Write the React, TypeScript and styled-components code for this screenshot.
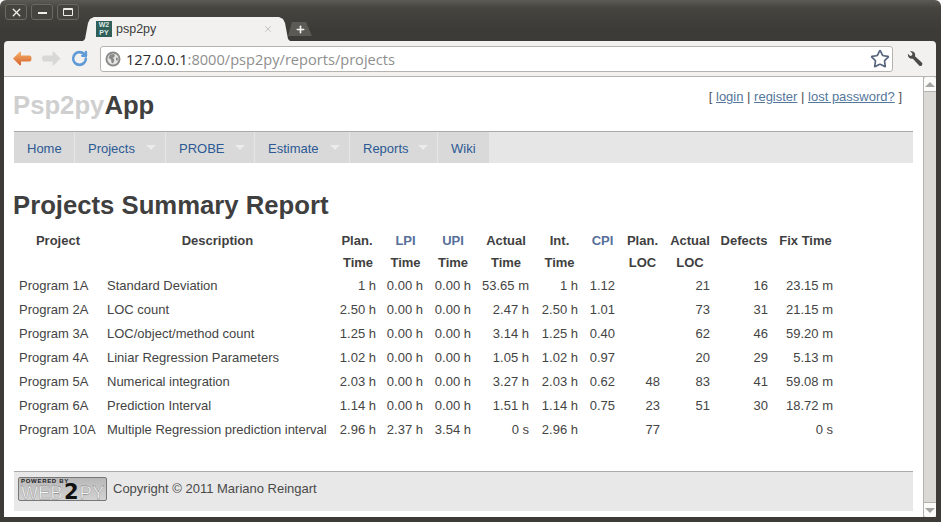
import React from 'react';
import styled, { createGlobalStyle } from 'styled-components';
import { Plus, RotateCw, Star, X } from 'lucide-react';

const GlobalStyle = createGlobalStyle`
  html, body {
    margin: 0;
    padding: 0;
    background: #fff;
  }
  body {
    font-family: "Liberation Sans", Arial, sans-serif;
    color: #444;
  }
`;

const Window = styled.div`
  width: 941px;
  height: 522px;
  overflow: hidden;
  display: flex;
  flex-direction: column;
  box-sizing: border-box;
  padding: 0 5px 5px 4px;
  border-radius: 6px 6px 0 0;
  background: linear-gradient(#5b5a54 0, #45443f 8px, #3c3b37 30px);
`;

const TabStrip = styled.div`
  height: 41px;
  flex: none;
  display: flex;
  align-items: flex-start;
`;

const WindowControls = styled.div`
  display: flex;
  gap: 4px;
  margin: 4px 0 0 1px;
`;

const WindowButton = styled.div`
  width: 22px;
  height: 16px;
  box-sizing: border-box;
  border: 1px solid #6a6962;
  border-radius: 3px;
  background: #45443f;
  color: #eeeeea;
  display: flex;
  align-items: center;
  justify-content: center;
`;

const MinimizeGlyph = styled.span`
  display: block;
  width: 9px;
  height: 2px;
  margin-top: 2px;
  background: #eeeeea;
`;

const MaximizeGlyph = styled.span`
  display: block;
  width: 8px;
  height: 5px;
  border: 1px solid #eeeeea;
  border-top-width: 2px;
  border-radius: 1px;
`;

const Tab = styled.div`
  width: 207px;
  height: 24px;
  margin: 17px 0 0 4px;
  padding: 0 17px 0 13px;
  box-sizing: border-box;
  display: flex;
  align-items: center;
  background: #f2f1f0;
  clip-path: polygon(0 100%, 2px 92%, 5px 25%, 7px 8%, 11px 0, calc(100% - 11px) 0, calc(100% - 7px) 8%, calc(100% - 5px) 25%, calc(100% - 2px) 92%, 100% 100%);
`;

const Favicon = styled.div`
  width: 16px;
  height: 16px;
  flex: none;
  background: #2f5f58;
  color: #dfe9e6;
  font-size: 7px;
  font-weight: bold;
  line-height: 8px;
  text-align: center;
`;

const TabTitle = styled.span`
  margin-left: 4px;
  font-size: 12.5px;
  color: #3c3c3c;
  flex: 1;
`;

const TabClose = styled.span`
  display: flex;
  color: #b8b8b6;
`;

const NewTabButton = styled.div`
  width: 24px;
  height: 14px;
  margin: 22px 0 0 -2px;
  background: #5b5a55;
  color: #f4f4f2;
  display: flex;
  align-items: center;
  justify-content: center;
  clip-path: polygon(0 100%, 4px 0, 18px 0, 100% 100%);
`;

const Toolbar = styled.div`
  height: 35px;
  flex: none;
  display: flex;
  align-items: center;
  box-sizing: content-box;
  padding: 0 12px 0 9px;
  background: #f2f1ef;
  border-bottom: 1px solid #b5b4b2;
  border-radius: 4px 4px 0 0;
`;

const NavIcons = styled.div`
  width: 87px;
  display: flex;
  align-items: center;
  gap: 10px;
  flex: none;
`;

const AddressBar = styled.div`
  width: 793px;
  height: 26px;
  box-sizing: border-box;
  margin-top: 1px;
  padding: 0 2px 0 4px;
  display: flex;
  align-items: center;
  background: #fff;
  border: 1px solid #b4b3b0;
  border-radius: 3px;
  font-family: "Open Sans", "Liberation Sans", sans-serif;
  font-size: 14.6px;
`;

const UrlHost = styled.span`
  margin-left: 5px;
  color: #2b2b2b;
`;

const UrlRest = styled.span`
  color: #8e8e8e;
  flex: 1;
`;

const WrenchSlot = styled.div`
  margin-left: 14px;
  display: flex;
`;

const Viewport = styled.div`
  flex: 1;
  min-height: 0;
  display: flex;
  background: #fff;
`;

const Page = styled.div`
  flex: 1;
  min-width: 0;
  display: flex;
  flex-direction: column;
  padding: 0 10px 6px 10px;
`;

const ScrollBar = styled.div`
  width: 13px;
  box-sizing: border-box;
  flex: none;
  display: flex;
  flex-direction: column;
  background: #dad9d6;
  border-left: 1px solid #b4b3b0;
`;

const ScrollButton = styled.div<{ $down?: boolean }>`
  height: 14px;
  background: #fbfbfa;
  display: flex;
  align-items: center;
  justify-content: center;
  border-radius: ${p => (p.$down ? '0 0 3px 3px' : '3px 3px 0 0')};
  border-top: ${p => (p.$down ? '1px solid #b4b3b0' : 'none')};
  border-bottom: ${p => (p.$down ? 'none' : '1px solid #b4b3b0')};
  margin-top: ${p => (p.$down ? 'auto' : '0')};
`;

const ScrollArrow = styled.span<{ $down?: boolean }>`
  width: 0;
  height: 0;
  border-left: 5px solid transparent;
  border-right: 5px solid transparent;
  border-${p => (p.$down ? 'top' : 'bottom')}: 5px solid #a5a5a3;
`;

const Header = styled.header`
  height: 54px;
  flex: none;
  display: flex;
  justify-content: space-between;
`;

const Logo = styled.h2`
  margin: 12px 0 0 -1px;
  font-size: 25.7px;
  line-height: 32px;
  font-weight: bold;
  color: #3f3f3f;
`;

const LogoLight = styled.span`
  color: #cfcfcf;
`;

const AuthLinks = styled.div`
  margin: 12px 11px 0 0;
  font-size: 13px;
  line-height: 16px;
  color: #555;
`;

const AuthLink = styled.a`
  color: #54779b;
  text-decoration: underline;
`;

const Menu = styled.nav`
  flex: none;
  height: 31px;
  display: flex;
  gap: 1px;
  border-top: 1px solid #aaa;
  background: #e6e6e6;
`;

const MenuItem = styled.div<{ $width: number }>`
  width: ${p => p.$width}px;
  box-sizing: border-box;
  padding: 1px 0 0 13px;
  display: flex;
  align-items: center;
  position: relative;
  background: #d9d9d9;
  color: #2c5a94;
  font-size: 13px;
`;

const MenuCaret = styled.span`
  position: absolute;
  right: 9px;
  top: 13px;
  width: 0;
  height: 0;
  border-left: 5px solid transparent;
  border-right: 5px solid transparent;
  border-top: 5px solid #ececec;
`;

const Title = styled.h1`
  flex: none;
  margin: 26px 0 8px -1px;
  font-size: 25.7px;
  line-height: 32px;
  font-weight: bold;
  color: #3f3f3f;
`;

const ReportTable = styled.table`
  width: 824px;
  flex: none;
  table-layout: fixed;
  border-collapse: collapse;
  font-size: 13px;
  color: #444;
`;

const HeadCell = styled.th<{ $link?: boolean; $nudge?: boolean }>`
  height: 22px;
  padding: 0 0 0 ${p => (p.$nudge ? '2px' : '0')};
  text-align: center;
  font-weight: bold;
  font-size: 13px;
  color: ${p => (p.$link ? '#56709a' : '#3f3f3f')};
`;

const Cell = styled.td<{ $text?: boolean }>`
  height: 24px;
  padding: 0 5px 0 5px;
  white-space: nowrap;
  text-align: ${p => (p.$text ? 'left' : 'right')};
`;

const Footer = styled.footer`
  margin-top: auto;
  height: 40px;
  flex: none;
  display: flex;
  align-items: flex-start;
  gap: 6px;
  padding: 5px 0 0 4px;
  box-sizing: border-box;
  border-top: 1px solid #aaa;
  background: #e8e8e8;
  font-size: 13px;
  line-height: 23px;
  color: #4a4a4a;
`;

const Badge = styled.div`
  width: 89px;
  height: 24px;
  box-sizing: border-box;
  position: relative;
  border: 1px solid #777;
  border-radius: 2px;
  background: linear-gradient(#b8b8b8, #d2d2d2);
  color: #222;
`;

const BadgeTop = styled.span`
  position: absolute;
  left: 2px;
  top: 0;
  font-size: 6px;
  line-height: 6px;
  font-weight: bold;
  letter-spacing: 0.7px;
  white-space: nowrap;
`;

const BadgeMark = styled.span`
  position: absolute;
  left: 2px;
  top: 6px;
  font-size: 18px;
  line-height: 16px;
  white-space: nowrap;
  letter-spacing: 0.3px;
  color: #f8f8f8;
  -webkit-text-stroke: 0.3px #666;
`;

const BadgeTwo = styled.span`
  font-family: "DejaVu Sans", sans-serif;
  font-weight: bold;
  font-size: 21px;
  padding: 0 1px;
  color: #111;
  -webkit-text-stroke: 0;
`;

const columnWidths = [88, 231, 48, 47, 48, 58, 49, 37, 45, 50, 58, 65];

const headers: [string, string, boolean][] = [
  ['Project', '', false],
  ['Description', '', false],
  ['Plan.', 'Time', false],
  ['LPI', 'Time', true],
  ['UPI', 'Time', true],
  ['Actual', 'Time', false],
  ['Int.', 'Time', false],
  ['CPI', '', true],
  ['Plan.', 'LOC', false],
  ['Actual', 'LOC', false],
  ['Defects', '', false],
  ['Fix Time', '', false],
];

const rows = [
  ['Program 1A', 'Standard Deviation', '1 h', '0.00 h', '0.00 h', '53.65 m', '1 h', '1.12', '', '21', '16', '23.15 m'],
  ['Program 2A', 'LOC count', '2.50 h', '0.00 h', '0.00 h', '2.47 h', '2.50 h', '1.01', '', '73', '31', '21.15 m'],
  ['Program 3A', 'LOC/object/method count', '1.25 h', '0.00 h', '0.00 h', '3.14 h', '1.25 h', '0.40', '', '62', '46', '59.20 m'],
  ['Program 4A', 'Liniar Regression Parameters', '1.02 h', '0.00 h', '0.00 h', '1.05 h', '1.02 h', '0.97', '', '20', '29', '5.13 m'],
  ['Program 5A', 'Numerical integration', '2.03 h', '0.00 h', '0.00 h', '3.27 h', '2.03 h', '0.62', '48', '83', '41', '59.08 m'],
  ['Program 6A', 'Prediction Interval', '1.14 h', '0.00 h', '0.00 h', '1.51 h', '1.14 h', '0.75', '23', '51', '30', '18.72 m'],
  ['Program 10A', 'Multiple Regression prediction interval', '2.96 h', '2.37 h', '3.54 h', '0 s', '2.96 h', '', '77', '', '', '0 s'],
];

const menuItems: [string, number, boolean][] = [
  ['Home', 60, false],
  ['Projects', 90, true],
  ['PROBE', 88, true],
  ['Estimate', 94, true],
  ['Reports', 87, true],
  ['Wiki', 51, false],
];

const BackArrow: React.FC = () => (
  <svg width="19" height="15" viewBox="0 0 19 15">
    <defs>
      <linearGradient id="back" x1="0" y1="0" x2="0" y2="1">
        <stop offset="0" stopColor="#f5b26a" />
        <stop offset="1" stopColor="#d8602a" />
      </linearGradient>
    </defs>
    <path d="M0 7.5 L7 .5 L8 1 V4.5 H16.5 Q18.5 4.5 18.5 7.5 Q18.5 10.5 16.5 10.5 H8 V14 L7 14.5 Z" fill="url(#back)" />
  </svg>
);

const ForwardArrow: React.FC = () => (
  <svg width="19" height="15" viewBox="0 0 19 15">
    <path d="M18.5 7.5 L11.5 .5 L10.5 1 V4.5 H2 Q0 4.5 0 7.5 Q0 10.5 2 10.5 H10.5 V14 L11.5 14.5 Z" fill="#d8d8d6" />
  </svg>
);

const GlobeIcon: React.FC = () => (
  <svg width="16" height="16" viewBox="0 0 16 16">
    <circle cx="8" cy="8" r="7.5" fill="#8a8a88" />
    <circle cx="8" cy="8" r="5.6" fill="#e4e4e2" />
    <path d="M5 3.5 L9 3 L10 5 L8 7 L9.5 9 L8 12.5 L6.5 11.5 L6 8.5 L3.5 7 Z" fill="#8a8a88" />
    <path d="M11 6.5 L13 7 L12.5 10 L11 9 Z" fill="#8a8a88" />
  </svg>
);

const WrenchIcon: React.FC = () => (
  <svg width="16" height="16" viewBox="0 0 18 18">
    <path
      d="M1 3.2 L3.6 5.6 L5.8 4.8 L6 2.6 L3.4 .6 C6 -.4 9 1 9.2 4 C9.2 5 9 5.6 9 6 L16.6 12.8 C17.8 14 17.4 15.4 16.6 16.2 C15.6 17.2 14.4 17 13.6 16.2 L6.6 8.6 C4 9.2 .6 7.6 1 3.2 Z"
      fill="#4a4a48"
    />
  </svg>
);

const App: React.FC = () => (
  <>
    <GlobalStyle />
    <Window>
      <TabStrip>
        <WindowControls>
          <WindowButton>
            <X size={13} strokeWidth={2.5} />
          </WindowButton>
          <WindowButton>
            <MinimizeGlyph />
          </WindowButton>
          <WindowButton>
            <MaximizeGlyph />
          </WindowButton>
        </WindowControls>
        <Tab>
          <Favicon>
            W2
            <br />
            PY
          </Favicon>
          <TabTitle>psp2py</TabTitle>
          <TabClose>
            <X size={10} strokeWidth={2} />
          </TabClose>
        </Tab>
        <NewTabButton>
          <Plus size={11} strokeWidth={3.5} />
        </NewTabButton>
      </TabStrip>
      <Toolbar>
        <NavIcons>
          <BackArrow />
          <ForwardArrow />
          <RotateCw size={17} strokeWidth={3.6} color="#5e9bd6" />
        </NavIcons>
        <AddressBar>
          <GlobeIcon />
          <UrlHost>127.0.0.1</UrlHost>
          <UrlRest>:8000/psp2py/reports/projects</UrlRest>
          <Star size={20} strokeWidth={2} color="#56657c" />
        </AddressBar>
        <WrenchSlot>
          <WrenchIcon />
        </WrenchSlot>
      </Toolbar>
      <Viewport>
        <Page>
          <Header>
            <Logo>
              <LogoLight>Psp2py</LogoLight>App
            </Logo>
            <AuthLinks>
              [ <AuthLink>login</AuthLink> | <AuthLink>register</AuthLink> | <AuthLink>lost password?</AuthLink> ]
            </AuthLinks>
          </Header>
          <Menu>
            {menuItems.map(([label, width, caret]) => (
              <MenuItem key={label} $width={width}>
                {label}
                {caret && <MenuCaret />}
              </MenuItem>
            ))}
          </Menu>
          <Title>Projects Summary Report</Title>
          <ReportTable>
            <colgroup>
              {columnWidths.map((w, i) => (
                <col key={i} width={w} />
              ))}
            </colgroup>
            <thead>
              <tr>
                {headers.map(([top, , link], i) => (
                  <HeadCell key={i} $link={link} $nudge={i >= 3 && i <= 7}>
                    {top}
                  </HeadCell>
                ))}
              </tr>
              <tr>
                {headers.map(([, bottom], i) => (
                  <HeadCell key={i} $nudge={i >= 2 && i <= 7}>
                    {bottom}
                  </HeadCell>
                ))}
              </tr>
            </thead>
            <tbody>
              {rows.map(row => (
                <tr key={row[0]}>
                  {row.map((value, i) => (
                    <Cell key={i} $text={i < 2}>
                      {value}
                    </Cell>
                  ))}
                </tr>
              ))}
            </tbody>
          </ReportTable>
          <Footer>
            <Badge>
              <BadgeTop>POWERED BY</BadgeTop>
              <BadgeMark>
                WEB<BadgeTwo>2</BadgeTwo>PY
              </BadgeMark>
            </Badge>
            Copyright © 2011 Mariano Reingart
          </Footer>
        </Page>
        <ScrollBar>
          <ScrollButton>
            <ScrollArrow />
          </ScrollButton>
          <ScrollButton $down>
            <ScrollArrow $down />
          </ScrollButton>
        </ScrollBar>
      </Viewport>
    </Window>
  </>
);

export default App;
